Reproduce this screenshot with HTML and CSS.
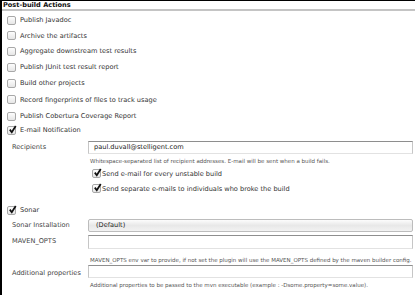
FILE: index.html
```html
<!DOCTYPE html>
<html>
<head>
    <title>Post-build Actions</title>
    <link rel="stylesheet" href="styles.css">
</head>
<body>
    <div class="section">
        <div class="section-title">Post-build Actions</div>

        <div class="option first-option"><span class="box"></span>Publish Javadoc</div>
        <div class="option option-short"><span class="box"></span>Archive the artifacts</div>
        <div class="option"><span class="box"></span>Aggregate downstream test results</div>
        <div class="option"><span class="box"></span>Publish JUnit test result report</div>
        <div class="option"><span class="box"></span>Build other projects</div>
        <div class="option option-tall"><span class="box"></span>Record fingerprints of files to track usage</div>
        <div class="option"><span class="box"></span>Publish Cobertura Coverage Report</div>
        <div class="option option-tight"><span class="box checked"><svg viewBox="0 0 10 10"><path d="M2 5.2 L4.2 8 L8.6 1.2" /></svg></span>E-mail Notification</div>

        <div class="field recipients">
            <div class="label">Recipients</div>
            <div class="input">paul.duvall@stelligent.com</div>
        </div>
        <div class="help help-first">Whitespace-separated list of recipient addresses. E-mail will be sent when a build fails.</div>
        <div class="sub-option"><span class="box checked"><svg viewBox="0 0 10 10"><path d="M2 5.2 L4.2 8 L8.6 1.2" /></svg></span>Send e-mail for every unstable build</div>
        <div class="sub-option"><span class="box checked"><svg viewBox="0 0 10 10"><path d="M2 5.2 L4.2 8 L8.6 1.2" /></svg></span>Send separate e-mails to individuals who broke the build</div>

        <div class="option sonar"><span class="box checked"><svg viewBox="0 0 10 10"><path d="M2 5.2 L4.2 8 L8.6 1.2" /></svg></span>Sonar</div>

        <div class="field installation">
            <div class="label">Sonar Installation</div>
            <div class="select">(Default)</div>
        </div>
        <div class="field maven">
            <div class="label">MAVEN_OPTS</div>
            <div class="input"></div>
        </div>
        <div class="help help-mid">MAVEN_OPTS env var to provide, if not set the plugin will use the MAVEN_OPTS defined by the maven builder config.</div>
        <div class="field additional">
            <div class="label label-middle">Additional properties</div>
            <div class="input"></div>
        </div>
        <div class="help help-last">Additional properties to be passed to the mvn executable (example : -Dsome.property=some.value).</div>
    </div>
</body>
</html>
```

FILE: styles.css
```css
body {
    margin: 0;
    font-family: "DejaVu Sans", Verdana, sans-serif;
    font-size: 6.6px;
    color: #333;
    background: #fff;
}
.section {
    height: 294px;
    border-top: 1px solid #000;
    border-left: 2px solid #000;
    overflow: hidden;
}
.section-title {
    height: 8px;
    line-height: 9px;
    padding-left: 1px;
    font-weight: bold;
    color: #111;
    border-bottom: 2px solid #c4c4c4;
}
.option {
    display: flex;
    align-items: center;
    height: 16px;
    padding-left: 5px;
}
.first-option {
    margin-top: 1px;
}
.option-short {
    height: 15px;
}
.option-tall {
    height: 17px;
}
.option-tight {
    height: 12px;
}
.box {
    position: relative;
    width: 7px;
    height: 7px;
    margin-right: 4px;
    border: 1px solid #a8a8a8;
    border-radius: 2px;
    background: linear-gradient(#fdfdfd, #e6e6e6);
    flex: none;
}
.box svg {
    position: absolute;
    left: 0;
    top: -2px;
    width: 9px;
    height: 9px;
}
.box svg path {
    fill: none;
    stroke: #111;
    stroke-width: 2;
}
.field {
    display: grid;
    grid-template-columns: 86px 1fr;
}
.label {
    padding-left: 10px;
    padding-top: 2px;
    color: #444;
}
.label-middle {
    padding-top: 4px;
}
.input {
    height: 11px;
    line-height: 11px;
    padding-left: 5px;
    border: 1px solid #c6c6c6;
    border-top-color: #8e8e8e;
    border-bottom-color: #e2e2e2;
    color: #222;
    margin-right: 2px;
}
.recipients {
    margin-top: 5px;
}
.help {
    padding-left: 88px;
    font-size: 5.5px;
    color: #555;
    height: 10px;
    line-height: 10px;
}
.help-first {
    margin-top: 2px;
}
.sub-option {
    display: flex;
    align-items: center;
    height: 15px;
    padding-left: 90px;
}
.sub-option .box {
    margin-right: 1px;
}
.sonar {
    margin-top: 6px;
}
.select {
    height: 11px;
    line-height: 11px;
    padding-left: 7px;
    border: 1px solid #bcbcbc;
    border-radius: 2px;
    background: linear-gradient(#fcfcfc, #e8e8e8 50%, #f2f2f2);
    color: #222;
    margin-right: 2px;
}
.installation {
    margin-top: 1px;
}
.maven {
    margin-top: 3px;
}
.maven .input {
    height: 12px;
}
.help-mid {
    margin-top: 6px;
}
.help-last {
    margin-top: 2px;
}
```
